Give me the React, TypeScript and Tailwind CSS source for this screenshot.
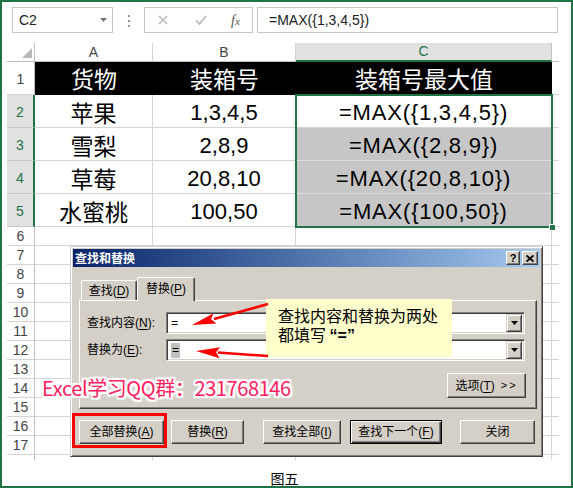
import React from 'react';

const CELL_FONT = "font-['Liberation_Sans','Noto_Sans_CJK_SC',sans-serif]";
const CJK = "font-['Noto_Sans_CJK_SC',sans-serif]";

const rows = [
  { n: 2, a: '苹果', b: '1,3,4,5', c: '=MAX({1,3,4,5})', active: true },
  { n: 3, a: '雪梨', b: '2,8,9', c: '=MAX({2,8,9})', active: false },
  { n: 4, a: '草莓', b: '20,8,10', c: '=MAX({20,8,10})', active: false },
  { n: 5, a: '水蜜桃', b: '100,50', c: '=MAX({100,50})', active: false },
];

const emptyRows = [6, 7, 8, 9, 10, 11, 12, 13, 14, 15, 16, 17];

function RowHead({ n, sel, tall }: { n: number; sel?: boolean; tall?: boolean }) {
  return (
    <div
      className={`w-[28px] shrink-0 border-b flex justify-center text-[14px] ${
        tall ? 'items-end pb-[4px]' : 'items-center'
      } ${
        sel
          ? 'bg-[#e1e1e1] text-[#217346] border-r-2 border-r-[#217346] border-b-[#c8c8c8]'
          : 'bg-white text-[#444] border-r border-r-[#bfbfbf] border-b-[#d4d4d4]'
      }`}
    >
      {n}
    </div>
  );
}

function Btn({
  className,
  children,
  def,
}: {
  className: string;
  children: React.ReactNode;
  def?: boolean;
}) {
  return (
    <div
      className={`${className} flex items-center justify-center bg-[#d4d0c8] ${
        def
          ? 'border border-black shadow-[inset_1px_1px_0_#fff,inset_-1px_-1px_0_#404040,inset_-2px_-2px_0_#808080]'
          : 'border border-t-white border-l-white border-r-[#404040] border-b-[#404040] shadow-[inset_-1px_-1px_0_#808080]'
      }`}
    >
      {children}
    </div>
  );
}

function Combo({ sel }: { sel?: boolean }) {
  return (
    <div className="w-[359px] h-[22px] bg-white border border-t-[#808080] border-l-[#808080] border-r-white border-b-white shadow-[inset_1px_1px_0_#404040,inset_-1px_-1px_0_#d4d0c8] flex items-center pl-[4px] pr-[2px]">
      <span className={sel ? 'bg-[#c0c0c0] px-[1px] leading-[15px]' : 'leading-[15px]'}>=</span>
      <div className="ml-auto w-[16px] h-[18px] bg-[#d4d0c8] border border-t-[#d4d0c8] border-l-[#d4d0c8] border-r-[#404040] border-b-[#404040] shadow-[inset_1px_1px_0_#fff,inset_-1px_-1px_0_#808080] flex items-center justify-center">
        <svg width="7" height="4" viewBox="0 0 7 4">
          <polygon points="0,0 7,0 3.5,4" fill="#000" />
        </svg>
      </div>
    </div>
  );
}

export default function App() {
  return (
    <div className={`relative w-[573px] h-[488px] overflow-hidden bg-white border-2 border-[#217346] ${CELL_FONT}`}>
      {/* formula bar */}
      <div className="flex items-start h-[41px] pt-[5px] pl-[10px]">
        <div className="w-[101px] h-[26px] border border-[#c6c6c6] flex items-center justify-between pl-[6px] pr-[5px]">
          <span className="text-[14px] text-[#222]">C2</span>
          <svg width="7" height="4" viewBox="0 0 7 4">
            <polygon points="0,0 7,0 3.5,4" fill="#777" />
          </svg>
        </div>
        <div className="w-[31px] flex flex-col items-center gap-[3px] pt-[8px]">
          <span className="w-[2px] h-[2px] bg-[#999]" />
          <span className="w-[2px] h-[2px] bg-[#999]" />
          <span className="w-[2px] h-[2px] bg-[#999]" />
        </div>
        <div className="w-[109px] h-[26px] border border-[#c6c6c6] flex items-center pl-[13px]">
          <svg width="10" height="10" viewBox="0 0 10 10">
            <path d="M1 1L9 9M9 1L1 9" stroke="#b5b5b5" strokeWidth="1.4" />
          </svg>
          <svg className="ml-[27px]" width="12" height="10" viewBox="0 0 12 10">
            <path d="M1 5.5L4.5 9L11 1" stroke="#b5b5b5" strokeWidth="1.6" fill="none" />
          </svg>
          <span className="ml-[24px] text-[14px] italic text-[#555] font-['Liberation_Serif',serif]">
            f<span className="text-[11px]">x</span>
          </span>
        </div>
        <div className="ml-[4px] w-[301px] h-[26px] border border-[#c6c6c6] flex items-center pl-[11px] text-[14px] text-[#222]">
          =MAX({'{'}1,3,4,5{'}'})
        </div>
      </div>

      {/* grid */}
      <div className="ml-[5px] w-[552px]">
        <div className="flex h-[19px]">
          <div className="w-[28px] border-r border-b border-r-[#bfbfbf] border-b-[#bfbfbf] flex items-end justify-end pr-[2px] pb-[3px]">
            <svg width="10" height="10" viewBox="0 0 10 10">
              <polygon points="10,0 10,10 0,10" fill="#b9b9b9" />
            </svg>
          </div>
          <div className="w-[118px] border-r border-b border-r-[#d4d4d4] border-b-[#bfbfbf] flex items-center justify-center text-[14px] text-[#444]">A</div>
          <div className="w-[143px] border-r border-b border-r-[#d4d4d4] border-b-[#bfbfbf] flex items-center justify-center text-[14px] text-[#444]">B</div>
          <div className="w-[256px] bg-[#e1e1e1] border-r border-r-[#bfbfbf] border-b-2 border-b-[#217346] flex items-center justify-center text-[14px] text-[#217346]">C</div>
          <div className="w-[7px] border-b border-b-[#bfbfbf]" />
        </div>

        <div className="flex h-[33px]">
          <RowHead n={1} tall />
          <div className={`flex bg-black text-white text-[23px] ${CJK}`}>
            <div className="w-[118px] flex items-center justify-center">货物</div>
            <div className="w-[143px] flex items-center justify-center">装箱号</div>
            <div className="w-[256px] flex items-center justify-center">装箱号最大值</div>
          </div>
          <div className="w-[7px] border-b border-[#d4d4d4]" />
        </div>

        {rows.map((r) => (
          <div key={r.n} className="flex h-[33px]">
            <RowHead n={r.n} sel tall />
            <div className={`w-[118px] border-r border-b border-[#d4d4d4] flex items-center justify-center pt-[2px] text-[23px] text-black ${CJK}`}>
              {r.a}
            </div>
            <div className="w-[143px] border-r border-b border-[#d4d4d4] flex items-center justify-center pt-[2px] text-[22px] text-black">
              {r.b}
            </div>
            <div
              className={`w-[256px] border-r border-b flex items-center justify-center pt-[2px] text-[22px] tracking-[0.8px] text-black ${
                r.active ? 'bg-white border-[#d4d4d4]' : 'bg-[#c6c6c6] border-[#dcdcdc]'
              }`}
            >
              {r.c}
            </div>
            <div className="w-[7px] border-b border-[#d4d4d4]" />
          </div>
        ))}

        {emptyRows.map((n) => (
          <div key={n} className="flex h-[19px]">
            <RowHead n={n} />
            <div className="w-[118px] border-r border-b border-[#d4d4d4]" />
            <div className="w-[143px] border-r border-b border-[#d4d4d4]" />
            <div className="w-[256px] border-r border-b border-[#d4d4d4]" />
            <div className="w-[7px] border-b border-[#d4d4d4]" />
          </div>
        ))}

        <div className="flex h-[5px] overflow-hidden">
          <div className="w-[28px] border-r border-r-[#bfbfbf] flex justify-center items-start pt-[3px] text-[14px] leading-[14px] text-[#444]">18</div>
          <div className="w-[118px] border-r border-[#d4d4d4]" />
          <div className="w-[143px] border-r border-[#d4d4d4]" />
          <div className="w-[256px] border-r border-[#d4d4d4]" />
        </div>
      </div>

      {/* caption */}
      <div className={`h-[26px] flex justify-center items-end pr-[4px] text-[14px] leading-[15px] text-black ${CJK}`}>图五</div>

      {/* selection range C2:C5 */}
      <div className="absolute left-[293px] top-[92px] w-[258px] h-[134px] border-2 border-[#217346]">
        <div className="absolute -right-[5px] -bottom-[5px] w-[7px] h-[7px] bg-[#217346] border border-white" />
      </div>

      {/* find & replace dialog */}
      <div className={`absolute left-[68px] top-[244px] w-[473px] h-[211px] bg-[#d4d0c8] border border-t-[#d4d0c8] border-l-[#d4d0c8] border-r-[#404040] border-b-[#404040] shadow-[inset_1px_1px_0_#fff,inset_-1px_-1px_0_#808080] p-[2px] text-[12px] text-black ${CELL_FONT}`}>
        <div className="h-[18px] bg-gradient-to-r from-[#0a246a] to-[#a6caf0] flex items-center justify-between pl-[2px] pr-[2px]">
          <span className={`text-white font-bold text-[12px] ${CJK}`}>查找和替换</span>
          <div className="flex gap-[2px]">
            <div className="w-[14px] h-[14px] bg-[#d4d0c8] border border-t-white border-l-white border-r-[#404040] border-b-[#404040] shadow-[inset_-1px_-1px_0_#808080] flex items-center justify-center text-[11px] font-bold leading-none">?</div>
            <div className="w-[16px] h-[14px] bg-[#d4d0c8] border border-t-white border-l-white border-r-[#404040] border-b-[#404040] shadow-[inset_-1px_-1px_0_#808080] flex items-center justify-center">
              <svg width="8" height="7" viewBox="0 0 8 7">
                <path d="M0.5 0.5L7.5 6.5M7.5 0.5L0.5 6.5" stroke="#000" strokeWidth="1.8" />
              </svg>
            </div>
          </div>
        </div>

        <div className="mt-[10px] ml-[6px] w-[458px]">
          <div className="relative z-10 flex items-end h-[23px] pl-[2px]">
            <div className="w-[56px] h-[20px] border-t border-l border-r border-t-white border-l-white border-r-[#404040] rounded-t-[2px] shadow-[inset_-1px_0_0_#808080] flex items-center justify-center">
              查找(<u className="underline-offset-2">D</u>)
            </div>
            <div className="w-[58px] h-[24px] -mb-[1px] bg-[#d4d0c8] border-t border-l border-r border-t-white border-l-white border-r-[#404040] rounded-t-[2px] shadow-[inset_-1px_0_0_#808080] flex items-center justify-center pb-[2px]">
              替换(<u className="underline-offset-2">P</u>)
            </div>
          </div>
          <div className="h-[109px] border border-t-white border-l-white border-r-[#404040] border-b-[#404040] shadow-[inset_-1px_-1px_0_#808080] pt-[11px] pl-[7px]">
            <div className="flex items-center h-[22px]">
              <span className="w-[79px]">查找内容(<u className="underline-offset-2">N</u>):</span>
              <Combo />
            </div>
            <div className="flex items-center h-[22px] mt-[5px]">
              <span className="w-[79px]">替换为(<u className="underline-offset-2">E</u>):</span>
              <Combo sel />
            </div>
            <div className="flex justify-end mt-[12px] pr-[10px]">
              <Btn className="w-[79px] h-[25px]">
                选项(<u className="underline-offset-2">T</u>)<span className="ml-[6px] tracking-[2px] text-[11px]">&gt;&gt;</span>
              </Btn>
            </div>
          </div>
        </div>

        <div className="flex mt-[11px] h-[24px]">
          <Btn className="ml-[6px] w-[85px] h-[24px]">全部替换(<u className="underline-offset-2">A</u>)</Btn>
          <Btn className="ml-[7px] w-[73px] h-[24px]">替换(<u className="underline-offset-2">R</u>)</Btn>
          <Btn className="ml-[19px] w-[78px] h-[24px]">查找全部(<u className="underline-offset-2">I</u>)</Btn>
          <Btn className="ml-[9px] w-[92px] h-[24px]" def>查找下一个(<u className="underline-offset-2">F</u>)</Btn>
          <Btn className="ml-[18px] w-[75px] h-[24px]">关闭</Btn>
        </div>
      </div>

      {/* callout note */}
      <div className={`absolute left-[264px] top-[297px] w-[186px] h-[58px] bg-[#ffffcc] pl-[12px] pt-[7px] text-[16px] leading-[19px] text-black ${CJK}`}>
        <div>查找内容和替换为两处</div>
        <div>
          都填写 <span className="font-['Liberation_Sans',sans-serif] font-bold">“=”</span>
        </div>
      </div>

      {/* red arrows */}
      <svg className="absolute -left-[2px] -top-[2px] pointer-events-none" width="573" height="488" viewBox="0 0 573 488">
        <line x1="268" y1="304" x2="214" y2="319" stroke="#ff0000" strokeWidth="2.5" />
        <polygon points="192,325 213.5,313.2 211,319.3 216.5,323.4" fill="#ff0000" />
        <line x1="268" y1="356" x2="218" y2="352.6" stroke="#ff0000" strokeWidth="2.5" />
        <polygon points="196,351 220.3,347.2 216,352.3 219.6,358.2" fill="#ff0000" />
      </svg>

      {/* highlight on 全部替换 */}
      <div className="absolute left-[70px] top-[411px] w-[95px] h-[35px] border-[3px] border-[#ff0000]" />

      {/* watermark */}
      <div className={`absolute left-[40px] top-[375px] text-[20px] leading-[21px] tracking-[-0.4px] text-[#ff2060] whitespace-nowrap [text-shadow:2px_0_0_#fff,-2px_0_0_#fff,0_2px_0_#fff,0_-2px_0_#fff,2px_2px_0_#fff,-2px_-2px_0_#fff,2px_-2px_0_#fff,-2px_2px_0_#fff,0_0_4px_#fff,0_0_4px_#fff] ${CJK}`}>
        Excel学习QQ群：231768146
      </div>
    </div>
  );
}
